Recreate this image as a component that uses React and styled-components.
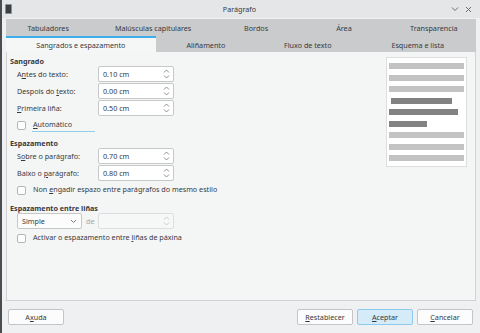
import React from "react"
import styled, { createGlobalStyle } from "styled-components"

const GlobalStyle = createGlobalStyle`
  html, body {
    margin: 0;
    padding: 0;
    background: #eff0f1;
  }
  body {
    font-family: "Noto Sans", "DejaVu Sans", sans-serif;
    font-size: 7.2px;
    color: #363a3f;
  }
`

const rowOne = [
  { label: "Tabuladores", grow: 84 },
  { label: "Maiúsculas capitulares", grow: 125 },
  { label: "Bordos", grow: 80 },
  { label: "Área", grow: 95 },
  { label: "Transparencia", grow: 84 },
]

const rowTwo = [
  { label: "Sangrados e espazamento", grow: 149, active: true },
  { label: "Aliñamento", grow: 100 },
  { label: "Fluxo de texto", grow: 103 },
  { label: "Esquema e lista", grow: 116 },
]

// preview lines: [left inset, right inset, dark]
const previewLines = [
  [2, 2, false],
  [2, 2, false],
  [2, 2, false],
  [4, 14, true],
  [2, 8, true],
  [2, 39, true],
  [2, 2, false],
  [2, 2, false],
  [2, 2, false],
]

function Arrows({ disabled }) {
  const c = disabled ? "#c4c6c8" : "#7f8386"
  return (
    <svg width="7" height="12" viewBox="0 0 7 12">
      <path d="M1 4.5 L3.5 2 L6 4.5" fill="none" stroke={c} strokeWidth="0.9" />
      <path d="M1 7.5 L3.5 10 L6 7.5" fill="none" stroke={c} strokeWidth="0.9" />
    </svg>
  )
}

function Spin({ value, disabled }) {
  return (
    <SpinBox $disabled={disabled}>
      <span>{value}</span>
      <Arrows disabled={disabled} />
    </SpinBox>
  )
}

function Check({ children, focus }) {
  return (
    <CheckRow>
      <CheckBox />
      <CheckLabel $focus={focus}>{children}</CheckLabel>
    </CheckRow>
  )
}

export default function App() {
  return (
    <Window>
      <GlobalStyle />
      {/* Title bar */}
      <TitleBar>
        <AppIcon />
        <Title>Parágrafo</Title>
        <Controls>
          <svg width="8" height="6" viewBox="0 0 8 6">
            <path d="M1 1.5 L4 4.5 L7 1.5" fill="none" stroke="#6b6f73" strokeWidth="1" />
          </svg>
          <svg width="7" height="7" viewBox="0 0 7 7">
            <path d="M1 1 L6 6 M6 1 L1 6" fill="none" stroke="#6b6f73" strokeWidth="1" />
          </svg>
        </Controls>
      </TitleBar>

      <Body>
        {/* Tabs */}
        <TabRow>
          {rowOne.map((t) => (
            <Tab key={t.label} $grow={t.grow}>{t.label}</Tab>
          ))}
        </TabRow>
        <TabRow>
          {rowTwo.map((t) => (
            <Tab key={t.label} $grow={t.grow} $active={t.active}>{t.label}</Tab>
          ))}
        </TabRow>

        <Panel>
          <Form>
            <Heading>Sangrado</Heading>
            <Field>
              <Label>A<u>n</u>tes do texto:</Label>
              <Spin value="0.10 cm" />
            </Field>
            <Field>
              <Label>Despois do <u>t</u>exto:</Label>
              <Spin value="0.00 cm" />
            </Field>
            <Field>
              <Label><u>P</u>rimeira liña:</Label>
              <Spin value="0.50 cm" />
            </Field>
            <Check focus><u>A</u>utomático</Check>

            <Heading $top={6}>Espazamento</Heading>
            <Field>
              <Label>S<u>o</u>bre o parágrafo:</Label>
              <Spin value="0.70 cm" />
            </Field>
            <Field>
              <Label>Baixo o <u>p</u>arágrafo:</Label>
              <Spin value="0.80 cm" />
            </Field>
            <Check>Non <u>e</u>ngadir espazo entre parágrafos do mesmo estilo</Check>

            <Heading $top={6}>Espazamento entre liñas</Heading>
            <Field>
              <ComboGroup>
                <Combo>
                  <span>Simple</span>
                  <svg width="7" height="5" viewBox="0 0 7 5">
                    <path d="M1 1 L3.5 3.5 L6 1" fill="none" stroke="#6b6f73" strokeWidth="0.9" />
                  </svg>
                </Combo>
                <Muted>de</Muted>
              </ComboGroup>
              <Spin value="" disabled />
            </Field>
            <Check>Activar o espazamento entre <u>l</u>iñas de páxina</Check>
          </Form>

          <Preview>
            {previewLines.map(([l, r, dark], i) => (
              <PreviewLine key={i} $left={l} $right={r} $dark={dark} />
            ))}
          </Preview>
        </Panel>

        <Footer>
          <Button>A<u>x</u>uda</Button>
          <Spacer />
          <Button><u>R</u>establecer</Button>
          <Button $primary><u>A</u>ceptar</Button>
          <Button><u>C</u>ancelar</Button>
        </Footer>
      </Body>
    </Window>
  )
}

// Styled-Components CSS
const Window = styled.div`
  width: 480px;
  height: 333px;
  box-sizing: border-box;
  border-left: 2px solid #4a4d50;
  display: flex;
  flex-direction: column;
  background: #eff0f1;
  overflow: hidden;

  u {
    text-decoration: underline;
    text-underline-offset: 1px;
  }
`
const TitleBar = styled.div`
  height: 18px;
  flex-shrink: 0;
  display: grid;
  grid-template-columns: 1fr auto 1fr;
  align-items: center;
  background: #e4e6e8;
  padding: 0 8px 0 3px;
`
const AppIcon = styled.div`
  width: 5px;
  height: 8px;
  border-radius: 1px;
  background: #3b3f43;
  border: 1px solid #8a8d90;
`
const Title = styled.div`
  text-align: center;
  margin-left: 2px;
`
const Controls = styled.div`
  display: flex;
  align-items: center;
  justify-content: flex-end;
  gap: 6px;
`
const Body = styled.div`
  flex: 1;
  display: flex;
  flex-direction: column;
  padding: 1px 4px 0 4px;
`
const TabRow = styled.div`
  display: flex;
  height: 17px;
  background: #c9cbcd;
  &:nth-child(2) {
    height: 16px;
  }
`
const Tab = styled.div`
  flex: ${(p) => p.$grow} 1 0;
  display: flex;
  align-items: center;
  justify-content: center;
  white-space: nowrap;
  box-sizing: border-box;
  background: ${(p) => (p.$active ? "#f5f6f6" : "transparent")};
  border-top: 2px solid ${(p) => (p.$active ? "#3daee9" : "transparent")};
  padding-bottom: 1px;
`
const Panel = styled.div`
  height: 249px;
  box-sizing: border-box;
  background: #f4f5f5;
  border: 1px solid #d0d2d3;
  border-top: none;
  display: flex;
  justify-content: space-between;
  padding: 4px 8px 0 3px;
`
const Form = styled.div`
  display: flex;
  flex-direction: column;
  width: 240px;
`
const Heading = styled.div`
  font-weight: 700;
  height: 10px;
  line-height: 10px;
  margin-top: ${(p) => p.$top || 0}px;
`
const Field = styled.div`
  display: flex;
  align-items: center;
  padding-left: 7px;
  height: 16px;
  margin-bottom: 1px;
`
const Label = styled.div`
  width: 81px;
  white-space: nowrap;
`
const SpinBox = styled.div`
  width: 76px;
  height: 16px;
  box-sizing: border-box;
  border: 1px solid ${(p) => (p.$disabled ? "#dcdee0" : "#c5c7c9")};
  border-radius: 2px;
  background: ${(p) => (p.$disabled ? "#f6f7f7" : "#ffffff")};
  display: flex;
  align-items: center;
  justify-content: space-between;
  padding: 0 3px 0 4px;
`
const CheckRow = styled.div`
  display: flex;
  align-items: center;
  gap: 6px;
  padding-left: 7px;
  height: 14px;
  margin-top: 1px;
`
const CheckBox = styled.div`
  width: 9px;
  height: 9px;
  box-sizing: border-box;
  border: 1px solid #b3b5b7;
  border-radius: 2px;
  background: #ffffff;
`
const CheckLabel = styled.div`
  white-space: nowrap;
  padding: 0 1px 2px 1px;
  border-bottom: 1px solid ${(p) => (p.$focus ? "#93cee9" : "transparent")};
  min-width: ${(p) => (p.$focus ? "61px" : "0")};
`
const ComboGroup = styled.div`
  width: 81px;
  display: flex;
  align-items: center;
  gap: 4px;
`
const Combo = styled.div`
  width: 65px;
  height: 16px;
  box-sizing: border-box;
  border: 1px solid #c5c7c9;
  border-radius: 2px;
  background: #fcfcfc;
  display: flex;
  align-items: center;
  justify-content: space-between;
  padding: 0 4px;
`
const Muted = styled.span`
  color: #a5a8ab;
`
const Preview = styled.div`
  width: 81px;
  height: 110px;
  margin-top: 1px;
  box-sizing: border-box;
  background: #ffffff;
  border: 1px solid #dcdee0;
  display: flex;
  flex-direction: column;
  gap: 5.5px;
  padding-top: 5px;
`
const PreviewLine = styled.div`
  height: 6px;
  margin-left: ${(p) => p.$left}px;
  margin-right: ${(p) => p.$right}px;
  background: ${(p) => (p.$dark ? "#828282" : "#c3c3c3")};
`
const Footer = styled.div`
  flex: 1;
  display: flex;
  align-items: center;
  gap: 4px;
  padding: 0 3px 0 2px;
`
const Spacer = styled.div`
  flex: 1;
`
const Button = styled.div`
  width: 56px;
  height: 16px;
  box-sizing: border-box;
  border: 1px solid ${(p) => (p.$primary ? "#8dcbee" : "#c3c5c7")};
  border-radius: 2px;
  background: ${(p) => (p.$primary ? "#d5ebf8" : "#fcfcfc")};
  display: flex;
  align-items: center;
  justify-content: center;
`
